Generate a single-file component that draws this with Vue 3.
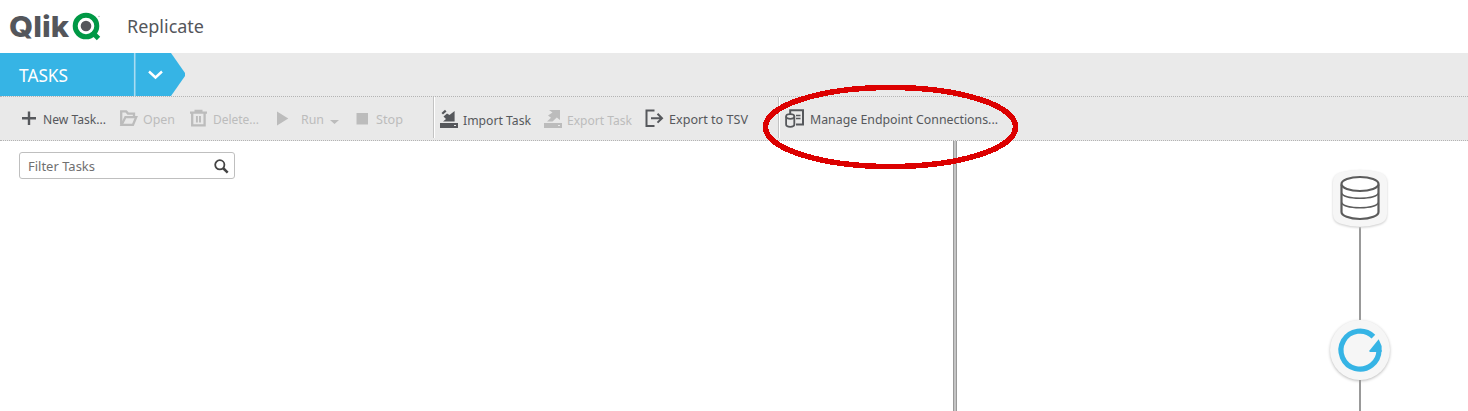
<script setup>
const tools = [
  { id: 'new', label: 'New Task...', width: 98, slot: 21, text: 63 },
  { id: 'open', label: 'Open', width: 70, slot: 23, text: 32, off: true },
  { id: 'delete', label: 'Delete...', width: 86, slot: 23, text: 46, off: true },
  { id: 'run', label: 'Run', width: 80, slot: 25, text: 23, off: true },
  { id: 'stop', label: 'Stop', width: 84, slot: 20, text: 27, off: true },
  { id: 'import', label: 'Import Task', width: 104, slot: 23, text: 68, sep: true, low: true },
  { id: 'export', label: 'Export Task', width: 101, slot: 23, text: 65, off: true, low: true },
  { id: 'tsv', label: 'Export to TSV', width: 140, slot: 24, text: 79 },
  { id: 'manage', label: 'Manage Endpoint Connections...', width: 220, slot: 25, text: 188, sep: true },
]
</script>

<template>
  <div class="app">
    <header class="brand">
      <svg class="logo" width="92" height="36" viewBox="0 0 92 36">
        <text class="wordmark" x="-1" y="25.500" textLength="60" lengthAdjust="spacingAndGlyphs">Qlik</text>
        <circle cx="76" cy="15" r="10.800" fill="none" stroke="#009845" stroke-width="5" />
        <path d="M82 21 88.500 27.500" stroke="#009845" stroke-width="4.800" />
        <circle cx="76" cy="15" r="5.300" fill="#54565b" />
        <circle cx="89" cy="5.500" r=".800" fill="#bbb" />
      </svg>
      <svg class="product" width="80" height="30"><text x="0" y="21" textLength="77" lengthAdjust="spacingAndGlyphs">Replicate</text></svg>
    </header>

    <nav class="tabs">
      <div class="tab">
        <svg class="tasks" width="52" height="28"><text x="0" y="19" textLength="49" lengthAdjust="spacingAndGlyphs">TASKS</text></svg>
        <svg class="arrow" width="52" height="43" viewBox="0 0 52 43">
          <path d="M.7 0V43" stroke="#a9dcf2" stroke-width="1.6" />
          <path d="M15 18.5 21.5 24.5 28 18.5" fill="none" stroke="#fff" stroke-width="2.4" />
        </svg>
      </div>
    </nav>

    <div class="toolbar">
      <div v-for="t in tools" :key="t.id" class="tool" :class="{ off: t.off, sep: t.sep, low: t.low }" :style="{ width: t.width + 'px' }">
        <span class="slot" :style="{ width: t.slot + 'px' }">
          <svg width="20" height="20" viewBox="0 0 20 20" fill="none" stroke="currentColor" stroke-width="2">
            <path v-if="t.id === 'new'" d="M7 2.5V16M0 9.3H14" stroke-width="2.4" />
            <g v-else-if="t.id === 'open'" stroke-width="2.3">
              <path d="M1.2 15.8V2.4H6.2L8 4.6H14V8" />
              <path d="M1.6 15.8 5.4 8.2H16.2L13 15.8Z" />
            </g>
            <g v-else-if="t.id === 'delete'" stroke-width="2.3">
              <path d="M0 3.6H17M4.5 1.8H12.5" /><path d="M2.2 4V16.4H14.6V4" />
              <path d="M6.9 7V13.5M10 7V13.5" stroke-width="1.9" />
            </g>
            <path v-else-if="t.id === 'run'" d="M1 2.5 12.3 9.5 1 16.5Z" fill="currentColor" stroke="none" />
            <path v-else-if="t.id === 'stop'" d="M.5 4H12V15.5H.5Z" fill="currentColor" stroke="none" />
            <g v-else-if="t.id === 'import'" fill="currentColor" stroke="none">
              <path d="M0 14H18V19H0Z" />
              <path d="M3 12.5 6 10 3.5 7.5 7 4.5 9.5 6 14.6 2V12.5Z" />
              <path d="M1.5 4 5 .8 6.5 2.4 3 5.6Z" />
              <path d="M14 16.5H16" stroke="#e9e9e9" stroke-width="1.2" />
            </g>
            <g v-else-if="t.id === 'export'" fill="currentColor" stroke="none">
              <path d="M0 14H18V19H0Z" />
              <path d="M5 1H16V11L12.8 8.6 8.5 12.5H3L7 8.8 4 6.5 8.5 3.6Z" />
              <path d="M14 16.5H16" stroke="#e9e9e9" stroke-width="1.2" />
            </g>
            <g v-else-if="t.id === 'tsv'">
              <path d="M9.5 1.5H1.5V17H9.5" />
              <path d="M6 9.2H16M12.5 4.8 17 9.2 12.5 13.6" />
            </g>
            <g v-else>
              <path d="M5.2 5V1.2H18V15.5H11" />
              <path d="M11 6.5H15.5M11 9.5H15.5" stroke-width="1.7" />
              <ellipse cx="5.2" cy="7.5" rx="4.1" ry="2.3" stroke-width="1.8" />
              <path d="M1.1 7.5V15.6C1.1 18.6 9.3 18.6 9.3 15.6V7.5" stroke-width="1.8" />
            </g>
          </svg>
        </span>
        <svg class="label" :width="t.text + 2" height="20">
          <text x="0" y="15" :textLength="t.text" lengthAdjust="spacingAndGlyphs">{{ t.label }}</text>
        </svg>
        <svg v-if="t.id === 'run'" class="caret" width="9" height="4"><path d="M0 0H9L4.5 4Z" fill="currentColor" /></svg>
      </div>
    </div>

    <main class="content">
      <section class="list">
        <div class="filter">
          <svg class="hint" width="72" height="20"><text x="0" y="15" textLength="67" lengthAdjust="spacingAndGlyphs">Filter Tasks</text></svg>
          <svg width="15" height="15" viewBox="0 0 15 15" fill="none" stroke="#444">
            <circle cx="5.8" cy="5.8" r="4.6" stroke-width="1.8" />
            <path d="M9 9 13.7 13.7" stroke-width="2.5" />
          </svg>
        </div>
      </section>
      <div class="splitter"></div>
      <section class="flow">
        <svg class="source" width="54" height="60" viewBox="0 0 54 60" fill="none" stroke="#5c5c5c">
          <path d="M0 14Q0 7 7 4.500Q27-1 47 4.500Q54 7 54 14V46Q54 53 47 55.500Q27 62 7 55.500Q0 53 0 46Z" fill="#f6f6f6" stroke="none" />
          <path d="M8.500 16.500V44C8.500 47.500 16 51 27 51S45.500 47.500 45.500 44V16.500" fill="#fff" stroke-width="2.200" />
          <path d="M8.500 25C11 32 43 32 45.500 25M8.500 34.500C11 41.500 43 41.500 45.500 34.500" stroke-width="1.400" />
          <ellipse cx="27" cy="16" rx="18.500" ry="7" fill="#fff" stroke-width="2.200" />
        </svg>
        <div class="link"></div>
        <div class="sync">
          <svg width="44" height="44" viewBox="0 0 44 44">
            <path d="M35.400 8.600A19 19 0 1 0 41 22" fill="none" stroke="#36b4e5" stroke-width="5.200" />
            <path d="M40.700 11.300 43.600 18V24H31.500V22.500Z" fill="#36b4e5" />
          </svg>
        </div>
        <div class="link rest"></div>
      </section>
    </main>
    <svg class="highlight" width="258" height="90" viewBox="0 0 258 90" shape-rendering="crispEdges">
      <ellipse cx="128.500" cy="45" rx="125" ry="39.500" fill="none" stroke="#dc0000" stroke-width="5.500" />
    </svg>
  </div>
</template>

<style scoped>
.app { position: relative; width: 1468px; height: 411px; overflow: hidden; display: flex; flex-direction: column; background: #fff; color: #54565b; font-family: "Noto Sans", sans-serif; }
svg { display: block; flex: none; overflow: visible; }
text { fill: currentColor; }
.brand { height: 53px; flex: none; display: flex; box-sizing: border-box; padding: 11px 0 0 10px; }
.wordmark { font: 800 29px Inter, sans-serif; fill: #54565b; }
.product { margin: 1px 0 0 25px; font-size: 18.5px; }
.tabs { height: 43px; flex: none; background: #eaeaea; }
.tab { display: flex; width: 186px; height: 43px; background: #36b4e5; color: #fff; clip-path: polygon(0 0, 171px 0, 185px 20px, 185px 23px, 171px 43px, 0 43px); }
.tasks { margin: 10px 0 0 19px; font-size: 18px; }
.arrow { margin-left: 63px; }
.toolbar { display: flex; flex: none; box-sizing: border-box; height: 45px; padding-left: 22px; background: #e9e9e9; border-top: 1px dotted #b4b4b4; border-bottom: 1px dotted #b4b4b4; }
.tool { position: relative; display: flex; align-items: flex-start; flex: none; box-sizing: border-box; padding-top: 12px; color: #56585c; font-size: 13px; }
.tool.off { color: #bcbcbc; }
.slot { flex: none; }
.low .label { margin-top: 1px; }
.caret { margin: 11px 0 0 4px; }
.sep::before { content: ""; position: absolute; left: -7px; top: 0; width: 1px; height: 41px; background: #c3c3c3; border-right: 1px solid #fff; }
.content { display: flex; flex: 1; min-height: 0; }
.list { width: 953px; padding: 11px 0 0 19px; box-sizing: border-box; }
.filter { display: flex; justify-content: space-between; box-sizing: border-box; width: 216px; height: 27px; border: 1px solid #bfbfbf; border-radius: 3px; padding: 6px 5px 0 8px; }
.hint { margin-top: -3px; font-size: 13px; color: #707070; }
.splitter { box-sizing: border-box; width: 4px; background: #c4c4c4; border-left: 1px solid #999; border-right: 1px solid #999; }
.flow { flex: 1; display: flex; flex-direction: column; align-items: center; padding: 27px 0 0 295px; }
.source { margin: 0 0 -1px; filter: drop-shadow(0 1px 1px #ccc); }
.link { width: 2px; height: 93px; flex: none; background: #999; }
.sync { flex: none; display: grid; place-items: center; width: 60px; height: 60px; border-radius: 50%; background: #f6f6f6; box-shadow: 0 1px 3px #bbb; }
.rest { height: 40px; }
.highlight { position: absolute; left: 762px; top: 82px; }
</style>
